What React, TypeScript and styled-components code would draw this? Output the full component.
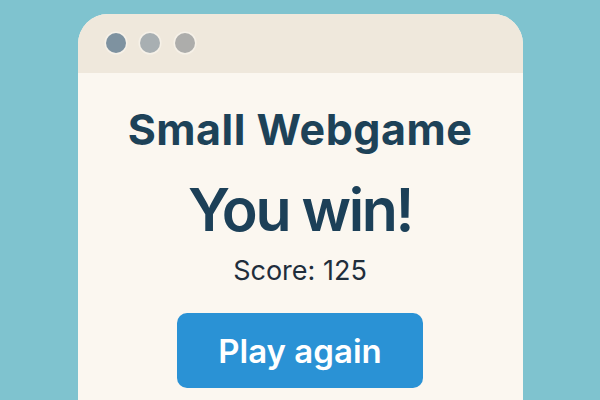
import React from "react";
import styled, { createGlobalStyle } from "styled-components";

const Global = createGlobalStyle`
  html, body { margin: 0; padding: 0; }
  body {
    width: 600px;
    height: 400px;
    overflow: hidden;
    background: #7fc3cf;
    font-family: Inter, "Noto Sans", sans-serif;
  }
`;

const Page = styled.div`
  display: flex;
  justify-content: center;
  padding-top: 14px;
  height: 400px;
  box-sizing: border-box;
  overflow: hidden;
`;

const Window = styled.div`
  width: 445px;
  height: 420px;
  border-radius: 30px 30px 0 0;
  overflow: hidden;
  background: #fbf7f0;
  display: flex;
  flex-direction: column;
`;

const TitleBar = styled.div`
  height: 59px;
  flex-shrink: 0;
  background: #efe8dc;
  display: flex;
  align-items: center;
  gap: 14.5px;
  padding-left: 28px;
  padding-bottom: 1px;
  box-sizing: border-box;
`;

const Dot = styled.span<{ $c: string }>`
  width: 20px;
  height: 20px;
  border-radius: 50%;
  background: ${(p) => p.$c};
  box-shadow: 0 0 0 1.5px #f6f1e8;
`;

const Content = styled.div`
  display: flex;
  flex-direction: column;
  align-items: center;
  padding-top: 30px;
`;

const Title = styled.h1`
  margin: 0;
  font-size: 43px;
  line-height: 52px;
  font-weight: 700;
  color: #1d4258;
  letter-spacing: 0.5px;
`;

const Win = styled.h2`
  margin: 20px 0 0 0;
  font-size: 59px;
  line-height: 70px;
  font-weight: 600;
  color: #1c4058;
  letter-spacing: -2.4px;
`;

const Score = styled.div`
  margin-top: 10px;
  font-size: 27px;
  line-height: 32px;
  font-weight: 400;
  color: #1f2e3c;
`;

const Button = styled.button`
  margin-top: 26px;
  width: 246px;
  height: 75px;
  flex-shrink: 0;
  border: none;
  border-radius: 10px;
  background: #2a92d5;
  color: #ffffff;
  font-family: Inter, "Noto Sans", sans-serif;
  font-size: 33px;
  font-weight: 600;
  padding: 0;
  cursor: pointer;
`;

export default function App() {
  return (
    <>
      <Global />
      <Page>
        <Window>
          <TitleBar>
            <Dot $c="#7e92a0" />
            <Dot $c="#a8afb2" />
            <Dot $c="#adadab" />
          </TitleBar>
          <Content>
            <Title>Small Webgame</Title>
            <Win>You win!</Win>
            <Score>Score: 125</Score>
            <Button>Play again</Button>
          </Content>
        </Window>
      </Page>
    </>
  );
}
